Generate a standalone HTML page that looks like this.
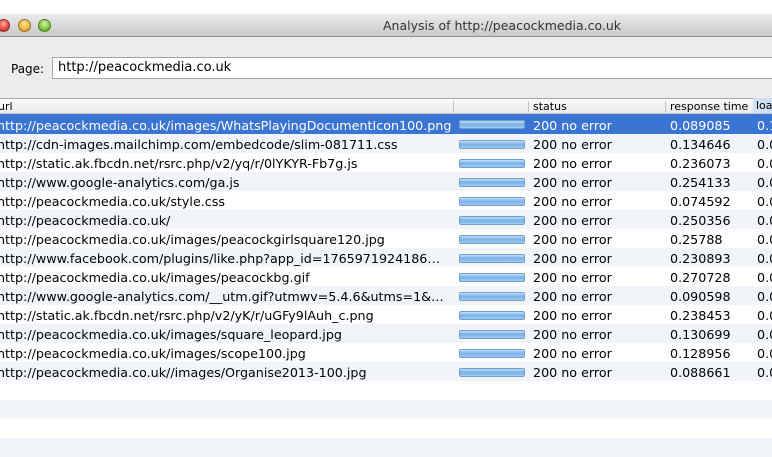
<!DOCTYPE html>
<html><head><style>
*{margin:0;padding:0;box-sizing:border-box}
body{width:772px;height:447px;overflow:hidden;background:#fff;font-family:"DejaVu Sans","Liberation Sans",sans-serif;font-size:12px;color:#000;position:relative}
.top{position:absolute;left:0;top:0;width:772px;height:14px;background:#fff}
.tb{position:absolute;left:0;top:14px;width:772px;height:23px;background:linear-gradient(#ebebeb,#c9c9c9);border-bottom:1px solid #8f8f8f}
.tb .t{position:absolute;left:383px;top:4px;font-size:12.5px;color:#333}
.c{position:absolute;top:19px;width:13px;height:13px;border-radius:50%;border:1px solid rgba(0,0,0,.35)}
.main{position:absolute;left:0;top:37px;width:772px;height:61px;background:#ececec}
.lbl{position:absolute;left:11px;top:62px}
.fld{position:absolute;left:52px;top:57px;width:730px;height:22px;background:#fff;border:1px solid #a4a4a4;padding:2px 5px;font-size:13px}
.hd{position:absolute;left:0;top:98px;width:772px;height:16px;background:linear-gradient(#fafafa,#ebebeb);border-top:1px solid #a8a8a8;border-bottom:1px solid #c8c8c8;font-size:11px}
.hd span{position:absolute;top:1px}
.hd i{position:absolute;top:2px;height:11px;border-left:1px solid #c0c0c0}
.row{position:absolute;left:0;width:772px;height:19px;white-space:nowrap}
.row span{position:absolute;top:3px;font-size:12.7px}
.alt{background:#f1f5fa}
.sel{background:#3b75d4;color:#fff}
.bar{position:absolute;left:459px;top:6px;width:66px;height:9px;border-radius:2px;background:linear-gradient(#c4def6,#78b0e8 50%,#a4ccf2);border:1px solid #6f9fd0}
</style></head><body>
<div class="top"></div>
<div class="tb"><div class="t">Analysis of http://peacockmedia.co.uk</div></div>
<div class="c" style="left:-3px;background:radial-gradient(circle at 50% 35%,#ffb0a8,#e0443a 60%,#b0302a)"></div>
<div class="c" style="left:18px;background:radial-gradient(circle at 50% 35%,#ffe6a0,#f0b23a 60%,#c88a20)"></div>
<div class="c" style="left:38px;background:radial-gradient(circle at 50% 35%,#d8f5b0,#7cc43a 60%,#4e9a20)"></div>
<div class="main"></div>
<div class="lbl">Page:</div>
<div class="fld">http://peacockmedia.co.uk</div>
<div class="hd">
<span style="left:-2px">url</span><i style="left:453px"></i><i style="left:528px"></i>
<span style="left:533px">status</span><i style="left:665px"></i>
<span style="left:670px">response time</span>
<span style="left:753px;top:-1px;height:15px;width:20px;background:#cfe0f5;padding:1px 0 0 3px">loa</span>
</div>
<div class="row sel" style="top:114px;height:20px"><span style="left:-3px;top:4px">http://peacockmedia.co.uk/images/WhatsPlayingDocumentIcon100.png</span><div class="bar"></div><span style="left:533px;top:4px">200 no error</span><span style="left:670px;top:4px">0.089085</span><span style="left:757px;top:4px">0.1</span></div>
<div class="row alt" style="top:134px"><span style="left:-3px">http://cdn-images.mailchimp.com/embedcode/slim-081711.css</span><div class="bar"></div><span style="left:533px">200 no error</span><span style="left:670px">0.134646</span><span style="left:757px">0.0</span></div>
<div class="row" style="top:153px"><span style="left:-3px">http://static.ak.fbcdn.net/rsrc.php/v2/yq/r/0lYKYR-Fb7g.js</span><div class="bar"></div><span style="left:533px">200 no error</span><span style="left:670px">0.236073</span><span style="left:757px">0.0</span></div>
<div class="row alt" style="top:172px"><span style="left:-3px">http://www.google-analytics.com/ga.js</span><div class="bar"></div><span style="left:533px">200 no error</span><span style="left:670px">0.254133</span><span style="left:757px">0.0</span></div>
<div class="row" style="top:191px"><span style="left:-3px">http://peacockmedia.co.uk/style.css</span><div class="bar"></div><span style="left:533px">200 no error</span><span style="left:670px">0.074592</span><span style="left:757px">0.0</span></div>
<div class="row alt" style="top:210px"><span style="left:-3px">http://peacockmedia.co.uk/</span><div class="bar"></div><span style="left:533px">200 no error</span><span style="left:670px">0.250356</span><span style="left:757px">0.0</span></div>
<div class="row" style="top:229px"><span style="left:-3px">http://peacockmedia.co.uk/images/peacockgirlsquare120.jpg</span><div class="bar"></div><span style="left:533px">200 no error</span><span style="left:670px">0.25788</span><span style="left:757px">0.0</span></div>
<div class="row alt" style="top:248px"><span style="left:-3px">http://www.facebook.com/plugins/like.php?app_id=1765971924186…</span><div class="bar"></div><span style="left:533px">200 no error</span><span style="left:670px">0.230893</span><span style="left:757px">0.0</span></div>
<div class="row" style="top:267px"><span style="left:-3px">http://peacockmedia.co.uk/images/peacockbg.gif</span><div class="bar"></div><span style="left:533px">200 no error</span><span style="left:670px">0.270728</span><span style="left:757px">0.0</span></div>
<div class="row alt" style="top:286px"><span style="left:-3px">http://www.google-analytics.com/__utm.gif?utmwv=5.4.6&amp;utms=1&amp;…</span><div class="bar"></div><span style="left:533px">200 no error</span><span style="left:670px">0.090598</span><span style="left:757px">0.0</span></div>
<div class="row" style="top:305px"><span style="left:-3px">http://static.ak.fbcdn.net/rsrc.php/v2/yK/r/uGFy9lAuh_c.png</span><div class="bar"></div><span style="left:533px">200 no error</span><span style="left:670px">0.238453</span><span style="left:757px">0.0</span></div>
<div class="row alt" style="top:324px"><span style="left:-3px">http://peacockmedia.co.uk/images/square_leopard.jpg</span><div class="bar"></div><span style="left:533px">200 no error</span><span style="left:670px">0.130699</span><span style="left:757px">0.0</span></div>
<div class="row" style="top:343px"><span style="left:-3px">http://peacockmedia.co.uk/images/scope100.jpg</span><div class="bar"></div><span style="left:533px">200 no error</span><span style="left:670px">0.128956</span><span style="left:757px">0.0</span></div>
<div class="row alt" style="top:362px"><span style="left:-3px">http://peacockmedia.co.uk//images/Organise2013-100.jpg</span><div class="bar"></div><span style="left:533px">200 no error</span><span style="left:670px">0.088661</span><span style="left:757px">0.0</span></div>
<div class="row alt" style="top:400px"></div>
<div class="row alt" style="top:438px"></div>
</body></html>
